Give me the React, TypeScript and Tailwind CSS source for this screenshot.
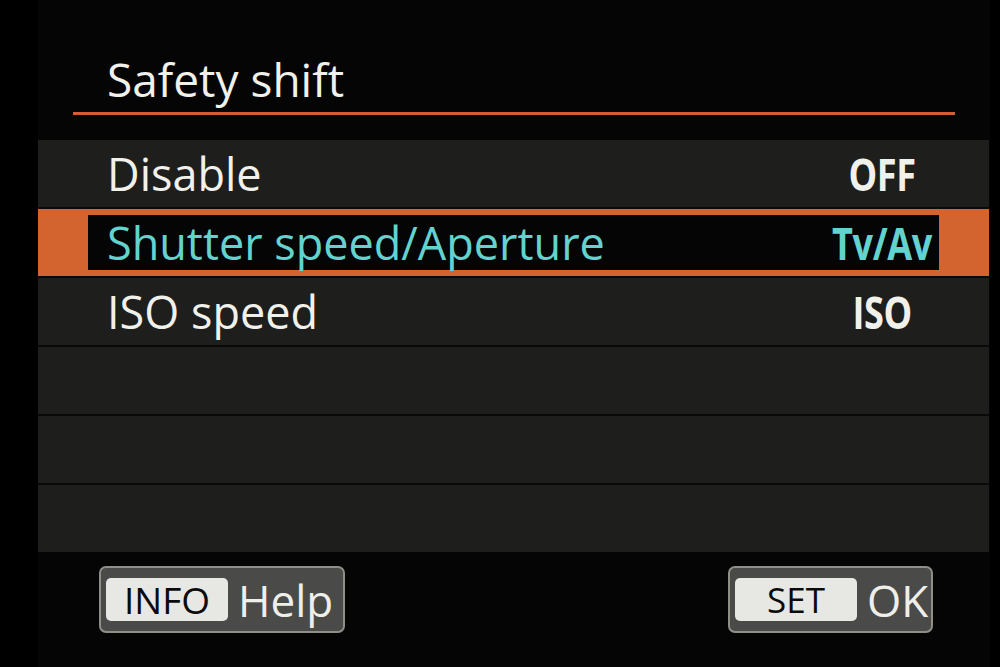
import React from 'react';

// Canon-style menu screen: "Safety shift"
interface MenuRow {
  label: string;
  value?: string;
  selected?: boolean;
}

const rows: MenuRow[] = [
  { label: 'Disable', value: 'OFF' },
  { label: 'Shutter speed/Aperture', value: 'Tv/Av', selected: true },
  { label: 'ISO speed', value: 'ISO' },
  { label: '' },
  { label: '' },
  { label: '' },
];

const Row: React.FC<{ row: MenuRow }> = ({ row }) => {
  const bg = row.selected ? 'bg-[#d3642f]' : 'bg-[#1e1e1d]';
  const inner = row.selected ? 'bg-[#050505]' : '';
  const text = row.selected ? 'text-[#63d3cf]' : 'text-[#f1f1ec]';
  return (
    <div className={`h-[67px] ${bg} flex`}>
      <div className={`flex-1 mx-[50px] my-[6px] flex items-center ${inner}`}>
        <div className={`flex-1 pl-[19px] font-medium text-[45px] leading-[60px] ${text}`}>{row.label}</div>
        {row.value && (
          <div className="w-[114px] flex justify-center">
            <span className={`inline-block scale-x-[0.82] font-bold text-[44px] leading-[60px] tracking-[-0.01em] ${text}`}>
              {row.value}
            </span>
          </div>
        )}
      </div>
    </div>
  );
};

const FooterButton: React.FC<{ keyLabel: string; action: string; width: string; keySize: string }> = ({
  keyLabel,
  action,
  width,
  keySize,
}) => (
  <div className={`${width} h-[67px] border-2 border-[#8f8f87] bg-[#4a4a48] rounded-[7px] flex items-center pl-[5px]`}>
    <div
      className={`w-[122px] h-[43px] rounded-[5px] bg-[#e7e7e4] flex items-center justify-center font-medium ${keySize} leading-none text-[#0b0b0b]`}
    >
      {keyLabel}
    </div>
    <div className="ml-[10px] font-medium text-[44px] leading-none text-[#efefea]">{action}</div>
  </div>
);

export default function App() {
  return (
    <div
      className="w-[1000px] h-[667px] bg-black flex overflow-hidden"
      style={{ fontFamily: '"Open Sans", "Noto Sans", sans-serif' }}
    >
      <div className="ml-[38px] w-[952px] h-full bg-[#050506] flex flex-col">
        {/* title */}
        <div className="h-[140px] flex flex-col">
          <div className="pt-[49px] pl-[69px] font-medium text-[46px] leading-[60px] text-[#f1f1ec]">Safety shift</div>
          <div className="mt-[3px] ml-[35px] w-[882px] h-[3px] bg-[#cf5f35]" />
        </div>

        {/* options */}
        <div className="w-[951px] flex flex-col gap-[2px] bg-[#0a0a0a]">
          {rows.map((row, i) => (
            <Row key={i} row={row} />
          ))}
        </div>

        {/* footer */}
        <div className="flex justify-between pt-[14px] pl-[61px] pr-[57px]">
          <FooterButton keyLabel="INFO" action="Help" width="w-[246px]" keySize="text-[37px]" />
          <FooterButton keyLabel="SET" action="OK" width="w-[205px]" keySize="text-[35px]" />
        </div>
      </div>
    </div>
  );
}
